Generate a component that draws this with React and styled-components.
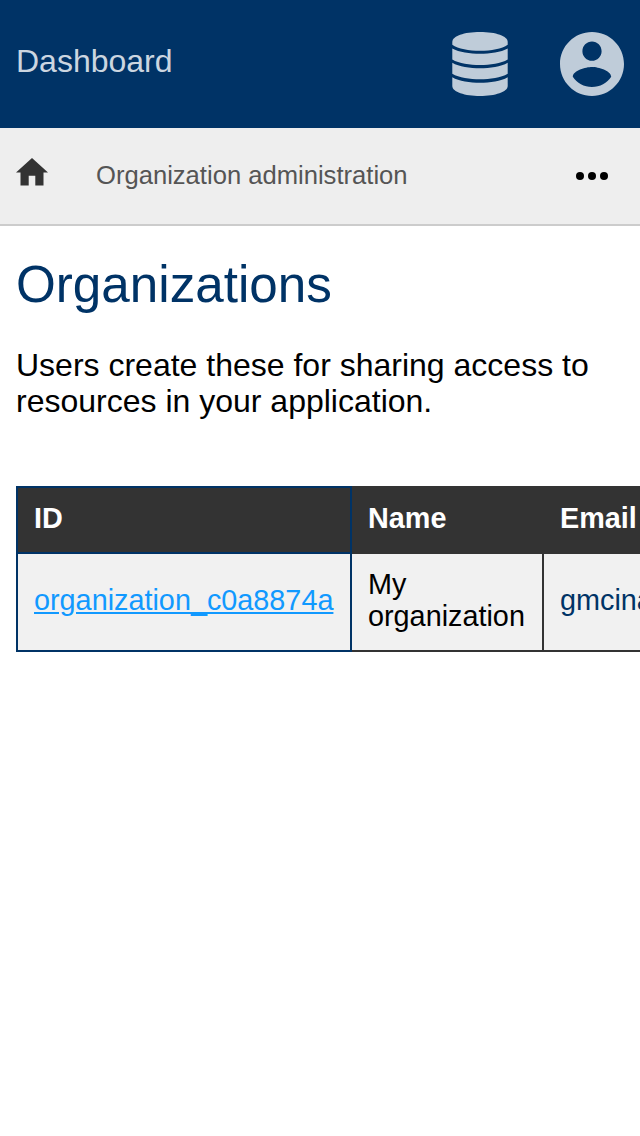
import React from 'react';
import styled, { createGlobalStyle } from 'styled-components';

const GlobalStyle = createGlobalStyle`
  * { box-sizing: border-box; }
  html { background: #fff; overflow: hidden; }
  body {
    margin: 0;
    overflow: hidden;
    font-family: 'Liberation Sans', Arial, sans-serif;
    font-size: 32px;
    color: #000;
  }
`;

const Page = styled.div`
  height: 1136px;
  overflow: hidden;
`;

const Header = styled.header`
  display: flex;
  align-items: center;
  justify-content: space-between;
  height: 128px;
  padding: 0 16px;
  background: #003366;
`;

const AppTitle = styled.a`
  padding-bottom: 6px;
  line-height: 36px;
  color: #ccd6e0;
`;

const HeaderActions = styled.nav`
  display: flex;
  align-items: center;
  gap: 48px;
  color: #bfccd9;
`;

const HeaderIcon = styled.svg`
  display: block;
  width: 64px;
  height: 64px;
  fill: currentColor;
`;

const Breadcrumbs = styled.nav`
  display: flex;
  align-items: center;
  height: 98px;
  padding: 0 32px 0 16px;
  background: #eee;
  border-bottom: 2px solid #ccc;
`;

const HomeIcon = styled.svg`
  display: block;
  width: 32px;
  height: 28px;
  margin: 0 48px 8px 0;
  fill: #333;
`;

const Crumb = styled.span`
  flex: 1;
  padding-bottom: 2px;
  font-size: 25.6px;
  line-height: 30px;
  color: #555;
`;

const MoreIcon = styled.svg`
  display: block;
  width: 32px;
  height: 8px;
`;

const Content = styled.main`
  padding: 29px 16px 0;
`;

const Heading = styled.h1`
  margin: 0 0 33px;
  font-size: 51.2px;
  font-weight: 400;
  line-height: 59px;
  color: #003366;
`;

const Intro = styled.p`
  margin: 0 0 67px;
  line-height: 36px;
`;

const Table = styled.table`
  width: 1000px;
  table-layout: fixed;
  border-collapse: collapse;
  font-size: 28.8px;
  line-height: 32px;
`;

const HeadCell = styled.th`
  width: ${(p) => p.$width}px;
  height: 66px;
  padding: 0 16px 4px;
  border: 2px solid ${(p) => (p.$active ? '#003366' : '#333')};
  background: #333;
  color: #fff;
  text-align: left;
`;

const Cell = styled.td`
  height: 98px;
  padding: 0 16px 4px;
  border: 2px solid ${(p) => (p.$active ? '#003366' : '#333')};
  background: #f1f1f1;
`;

const RecordLink = styled.a`
  color: #1199ff;
  text-decoration: underline;
`;

const Email = styled.span`
  color: #003366;
`;

export default function App() {
  return (
    <Page>
      <GlobalStyle />
      <Header>
        <AppTitle>Dashboard</AppTitle>
        <HeaderActions>
          <HeaderIcon viewBox="0 0 64 64">
            <path d="M4.3 10C4.3 4 16 0 32 0S59.7 4 59.7 10V12.8C54 17 43 18.8 32 18.8S10 17 4.3 12.8Z" />
            <path d="M4.3 16.5C11 20.3 22 21.8 32 21.8S53 20.3 59.7 16.5V27.5C53 31.5 42 33 32 33S11 31.5 4.3 27.5Z" />
            <path d="M4.3 30.8C11 34.8 22 36.3 32 36.3S53 34.8 59.7 30.8V41.8C53 45.8 42 47.3 32 47.3S11 45.8 4.3 41.8Z" />
            <path d="M4.3 45.2C11 49.2 22 50.7 32 50.7S53 49.2 59.7 45.2V54C59.7 60 47 64 32 64S4.3 60 4.3 54Z" />
          </HeaderIcon>
          <HeaderIcon viewBox="2 2 20 20">
            <path d="M12 2C6.48 2 2 6.48 2 12s4.48 10 10 10 10-4.48 10-10S17.52 2 12 2zm0 3c1.66 0 3 1.34 3 3s-1.34 3-3 3-3-1.34-3-3 1.34-3 3-3zm0 14.2c-2.5 0-4.71-1.28-6-3.22.03-1.99 4-3.08 6-3.08 1.99 0 5.97 1.09 6 3.08-1.29 1.94-3.5 3.22-6 3.22z" />
          </HeaderIcon>
        </HeaderActions>
      </Header>
      <Breadcrumbs>
        <HomeIcon viewBox="0 0 32 28">
          <path d="M16 0L32 14.4H27.5V27.5H19.3V17.8H12.7V27.5H4.5V14.4H0Z" />
        </HomeIcon>
        <Crumb>Organization administration</Crumb>
        <MoreIcon viewBox="0 0 32 8">
          <circle cx="4" cy="4" r="4" />
          <circle cx="16" cy="4" r="4" />
          <circle cx="28" cy="4" r="4" />
        </MoreIcon>
      </Breadcrumbs>
      <Content>
        <Heading>Organizations</Heading>
        <Intro>Users create these for sharing access to resources in your application.</Intro>
        <Table>
          <thead>
            <tr>
              <HeadCell $active $width={334}>ID</HeadCell>
              <HeadCell $width={192}>Name</HeadCell>
              <HeadCell>Email</HeadCell>
            </tr>
          </thead>
          <tbody>
            <tr>
              <Cell $active><RecordLink href="#">organization_c0a8874a</RecordLink></Cell>
              <Cell>My organization</Cell>
              <Cell><Email>gmcina</Email></Cell>
            </tr>
          </tbody>
        </Table>
      </Content>
    </Page>
  );
}
